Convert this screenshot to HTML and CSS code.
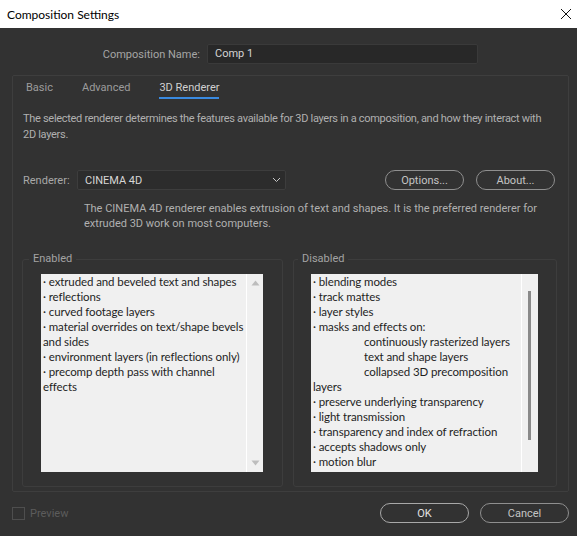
FILE: index.html
```html
<!DOCTYPE html>
<html lang="en">
<head>
  <meta charset="UTF-8">
  <title>Composition Settings</title>
  <link rel="stylesheet" href="styles.css">
</head>
<body>
  <div class="dialog">
    <header class="title-bar">
      <span class="title">Composition Settings</span>
      <svg class="close" width="12" height="12" viewBox="0 0 12 12">
        <path d="M1 1 L11 11 M11 1 L1 11" stroke="#111" stroke-width="1" fill="none"/>
      </svg>
    </header>
    <main class="dialog-main">
      <div class="name-row">
        <label class="name-label">Composition Name:</label>
        <div class="name-input">Comp 1</div>
      </div>

      <section class="panel">
        <nav class="tabs">
          <span class="tab">Basic</span>
          <span class="tab">Advanced</span>
          <span class="tab active">3D Renderer</span>
        </nav>
        <p class="desc">The selected renderer determines the features available for 3D layers in a composition, and how they interact with<br>2D layers.</p>

        <div class="renderer-row">
          <span class="renderer-label">Renderer:</span>
          <div class="select">
            <span>CINEMA 4D</span>
            <svg width="9" height="6" viewBox="0 0 9 6"><path d="M1 1 L4.5 4.5 L8 1" stroke="#c8c8c8" fill="none"/></svg>
          </div>
          <div class="btns">
            <button class="pill">Options...</button>
            <button class="pill">About...</button>
          </div>
        </div>
        <p class="renderer-desc">The CINEMA 4D renderer enables extrusion of text and shapes. It is the preferred renderer for<br>extruded 3D work on most computers.</p>

        <div class="groups">
          <fieldset class="group">
            <legend>Enabled</legend>
            <div class="listbox">
              <ul class="items">
                <li>· extruded and beveled text and shapes</li>
                <li>· reflections</li>
                <li>· curved footage layers</li>
                <li>· material overrides on text/shape bevels<br>and sides</li>
                <li>· environment layers (in reflections only)</li>
                <li>· precomp depth pass with channel<br>effects</li>
              </ul>
              <div class="scroll arrows">
                <svg width="9" height="6" viewBox="0 0 9 6"><path d="M0.5 5.5 L4.5 0.5 L8.5 5.5 Z" fill="#bdbdbd"/></svg>
                <svg width="9" height="6" viewBox="0 0 9 6"><path d="M0.5 0.5 L4.5 5.5 L8.5 0.5 Z" fill="#bdbdbd"/></svg>
              </div>
            </div>
          </fieldset>
          <fieldset class="group">
            <legend>Disabled</legend>
            <div class="listbox">
              <ul class="items">
                <li>· blending modes</li>
                <li>· track mattes</li>
                <li>· layer styles</li>
                <li>· masks and effects on:</li>
                <li class="sub">continuously rasterized layers</li>
                <li class="sub">text and shape layers</li>
                <li class="sub">collapsed 3D precomposition</li>
                <li>layers</li>
                <li>· preserve underlying transparency</li>
                <li>· light transmission</li>
                <li>· transparency and index of refraction</li>
                <li>· accepts shadows only</li>
                <li>· motion blur</li>
              </ul>
              <div class="scroll">
                <div class="thumb"></div>
              </div>
            </div>
          </fieldset>
        </div>
      </section>

      <footer class="footer">
        <label class="preview"><span class="check"></span>Preview</label>
        <div class="btns">
          <button class="pill wide ok">OK</button>
          <button class="pill wide">Cancel</button>
        </div>
      </footer>
    </main>
  </div>
</body>
</html>
```
FILE: styles.css
```css
body, ul, li, p, fieldset, legend {
  margin: 0;
  padding: 0;
  box-sizing: border-box;
}
ul, li {
  list-style: none;
}
body {
  background: #323232;
  font-family: Roboto, "Noto Sans", sans-serif;
  font-size: 11px;
  color: #b3b3b3;
}
.dialog {
  width: 577px;
  height: 536px;
}
.title-bar {
  height: 28px;
  background: #fff;
  display: flex;
  align-items: center;
  justify-content: space-between;
  padding: 0 5px 0 7px;
}
.title {
  color: #000;
  font-family: Lato, sans-serif;
  font-size: 12px;
}
.dialog-main {
  padding-top: 16px;
}
.name-row {
  display: flex;
  align-items: center;
  height: 20px;
}
.name-label {
  color: #a6a6a6;
  width: 200px;
  margin-right: 7px;
  text-align: right;
}
.name-input {
  width: 271px;
  height: 20px;
  line-height: 18px;
  background: #282828;
  border: 1px solid #3a3a3a;
  border-radius: 2px;
  padding-left: 7px;
  color: #d4d4d4;
  box-sizing: border-box;
}
.panel {
  margin: 11px 0 0 12px;
  width: 557px;
  height: 417px;
  border: 1px solid #3e3e3e;
  border-radius: 2px;
  box-sizing: border-box;
}
.tabs {
  display: flex;
  gap: 29px;
  padding: 4px 0 0 13px;
}
.tab {
  line-height: 16px;
  padding-bottom: 1px;
  border-bottom: 2px solid transparent;
  color: #9c9c9c;
}
.tab.active {
  color: #d0d0d0;
  border-bottom-color: #3a8ae0;
}
.desc {
  margin-top: 12px;
  padding-left: 10px;
  line-height: 16px;
  letter-spacing: -0.3px;
  color: #b0b0b0;
}
.renderer-row {
  margin-top: 27px;
  display: flex;
  align-items: center;
  height: 20px;
  padding: 0 13px 0 10px;
}
.renderer-label {
  width: 54px;
  color: #a8a8a8;
}
.select {
  width: 209px;
  height: 20px;
  border: 1px solid #3d3d3d;
  border-radius: 2px;
  background: #2c2c2c;
  box-sizing: border-box;
  display: flex;
  align-items: center;
  justify-content: space-between;
  padding: 0 4px 0 7px;
  color: #d6d6d6;
}
.btns {
  margin-left: auto;
  display: flex;
  gap: 12px;
}
.pill {
  font: inherit;
  height: 20px;
  width: 79px;
  padding: 0;
  background: transparent;
  border: 1px solid #8f8f8f;
  border-radius: 10px;
  color: #c4c4c4;
  line-height: 17px;
}
.pill.wide {
  width: 89px;
  height: 20px;
}
.pill.ok {
  color: #e2e2e2;
  border-color: #a8a8a8;
}
.renderer-desc {
  margin-top: 11px;
  padding-left: 71px;
  line-height: 15px;
  color: #b0b0b0;
}
.groups {
  display: grid;
  grid-template-columns: 261px 264px;
  gap: 10px;
  padding-left: 9px;
  margin-top: 20px;
}
.group {
  border: 1px solid #3d3d3d;
  border-radius: 3px;
  padding: 7px 19px 14px 18px;
  min-width: 0;
}
.group + .group {
  padding: 7px 18px 14px 17px;
}
.group legend {
  margin-left: -12px;
  padding: 0 4px;
  line-height: 16px;
  color: #a3a3a3;
}
.group + .group legend {
  margin-left: -13px;
}
.listbox {
  height: 198px;
  background: #f0f0f0;
  display: flex;
}
.items {
  flex: 1;
  padding: 0 2px;
  font-family: Lato, sans-serif;
  font-size: 11.5px;
  letter-spacing: -0.1px;
  line-height: 15px;
  color: #1e1e1e;
  white-space: nowrap;
}
.items .sub {
  padding-left: 51px;
}
.scroll {
  width: 16px;
  border-left: 1px solid #fff;
}
.scroll.arrows {
  display: flex;
  flex-direction: column;
  align-items: center;
  justify-content: space-between;
  padding: 6px 0 6px;
}
.thumb {
  margin: 17px 0 0 6px;
  width: 3px;
  height: 149px;
  background: #8a8a8a;
}
.footer {
  margin-top: 11px;
  display: flex;
  align-items: center;
  height: 20px;
  padding: 0 8px 0 12px;
}
.preview {
  display: flex;
  align-items: center;
  gap: 5px;
  color: #5c5c5c;
}
.check {
  width: 13px;
  height: 13px;
  border: 1px solid #4e4e4e;
  box-sizing: border-box;
}
.footer .btns {
  gap: 11px;
}
```
